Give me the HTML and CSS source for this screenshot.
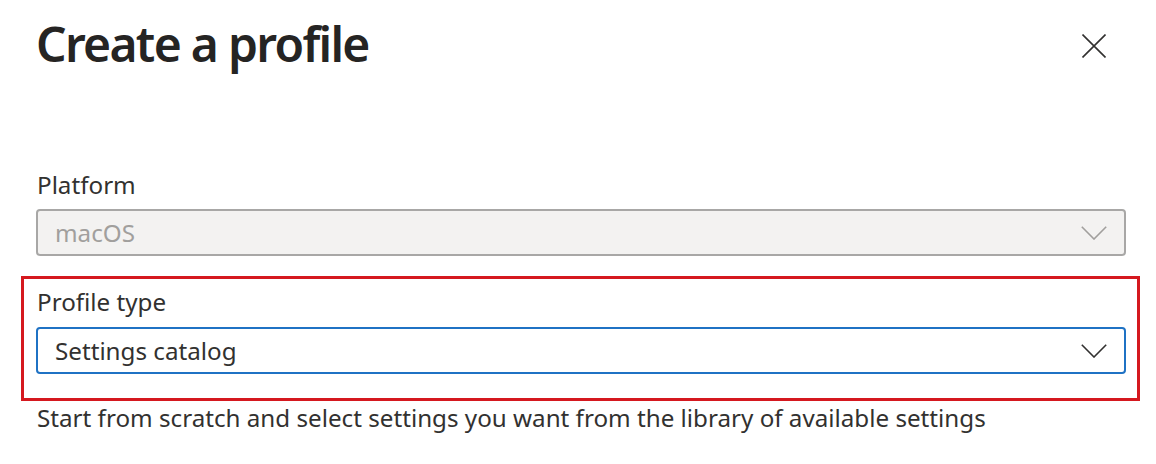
FILE: index.html
```html
<!DOCTYPE html>
<html lang="en">
<head>
<meta charset="utf-8">
<title>Create a profile</title>
<link rel="stylesheet" href="styles.css">
</head>
<body>
<div class="panel">
  <header class="header">
    <h1 class="title">Create a profile</h1>
    <button class="close" aria-label="Close">
      <svg width="24" height="24" viewBox="0 0 24 24"><path d="M0.5 0.5 L23.5 23.5 M23.5 0.5 L0.5 23.5" stroke="#323130" stroke-width="1.6" fill="none"/></svg>
    </button>
  </header>
  <div class="form">
    <div class="field">
      <label class="label">Platform</label>
      <div class="dropdown dropdown--disabled">
        <span class="dropdown__value">macOS</span>
        <svg class="chevron" width="26" height="14" viewBox="0 0 26 14"><polyline points="0.8,0.8 13,13 25.2,0.8" stroke="#a19f9d" stroke-width="1.6" fill="none"/></svg>
      </div>
    </div>
    <div class="field highlight">
      <label class="label">Profile type</label>
      <div class="dropdown dropdown--focused">
        <span class="dropdown__value">Settings catalog</span>
        <svg class="chevron" width="26" height="14" viewBox="0 0 26 14"><polyline points="0.8,0.8 13,13 25.2,0.8" stroke="#323130" stroke-width="1.6" fill="none"/></svg>
      </div>
    </div>
    <p class="description">Start from scratch and select settings you want from the library of available settings</p>
  </div>
</div>
</body>
</html>
```
FILE: styles.css
```css
html, body {
  margin: 0;
  padding: 0;
  background: #ffffff;
}
body {
  font-family: "Noto Sans", "Open Sans", sans-serif;
  color: #323130;
}
.panel {
  width: 1156px;
  height: 464px;
  overflow: hidden;
}
.header {
  display: flex;
  justify-content: space-between;
  align-items: flex-start;
  padding: 12px 50px 0 36px;
}
.title {
  margin: 0;
  font-size: 48px;
  font-weight: 600;
  line-height: 64px;
  letter-spacing: -1.7px;
  color: #252423;
}
.close {
  margin-top: 22px;
  width: 24px;
  height: 24px;
  padding: 0;
  border: 0;
  background: none;
  display: block;
}
.close svg { display: block; }
.form {
  margin-top: 93px;
  padding-left: 36px;
  width: 1090px;
}
.field {
  display: flex;
  flex-direction: column;
}
.label {
  font-size: 24.2px;
  line-height: 32px;
  margin-bottom: 8px;
  padding-left: 1px;
}
.dropdown {
  box-sizing: border-box;
  height: 47px;
  display: flex;
  align-items: center;
  justify-content: space-between;
  border-radius: 4px;
  padding: 0 17px 0 17px;
}
.dropdown__value {
  font-size: 24.2px;
  line-height: 32px;
}
.dropdown--disabled {
  background: #f3f2f1;
  border: 2px solid #a8a7a6;
  color: #a19f9d;
}
.dropdown--focused {
  background: #ffffff;
  border: 2px solid #1f72c4;
  color: #323130;
}
.chevron {
  display: block;
  margin-top: 1px;
}
.highlight {
  margin: 20px -14px 0 -15px;
  border: 3px solid #d5181f;
  padding: 7px 11px 24px 12px;
}
.highlight .label {
  margin-bottom: 9px;
}
.description {
  margin: 1px 0 0 0;
  font-size: 24.2px;
  line-height: 32px;
  padding-left: 1px;
}
```
